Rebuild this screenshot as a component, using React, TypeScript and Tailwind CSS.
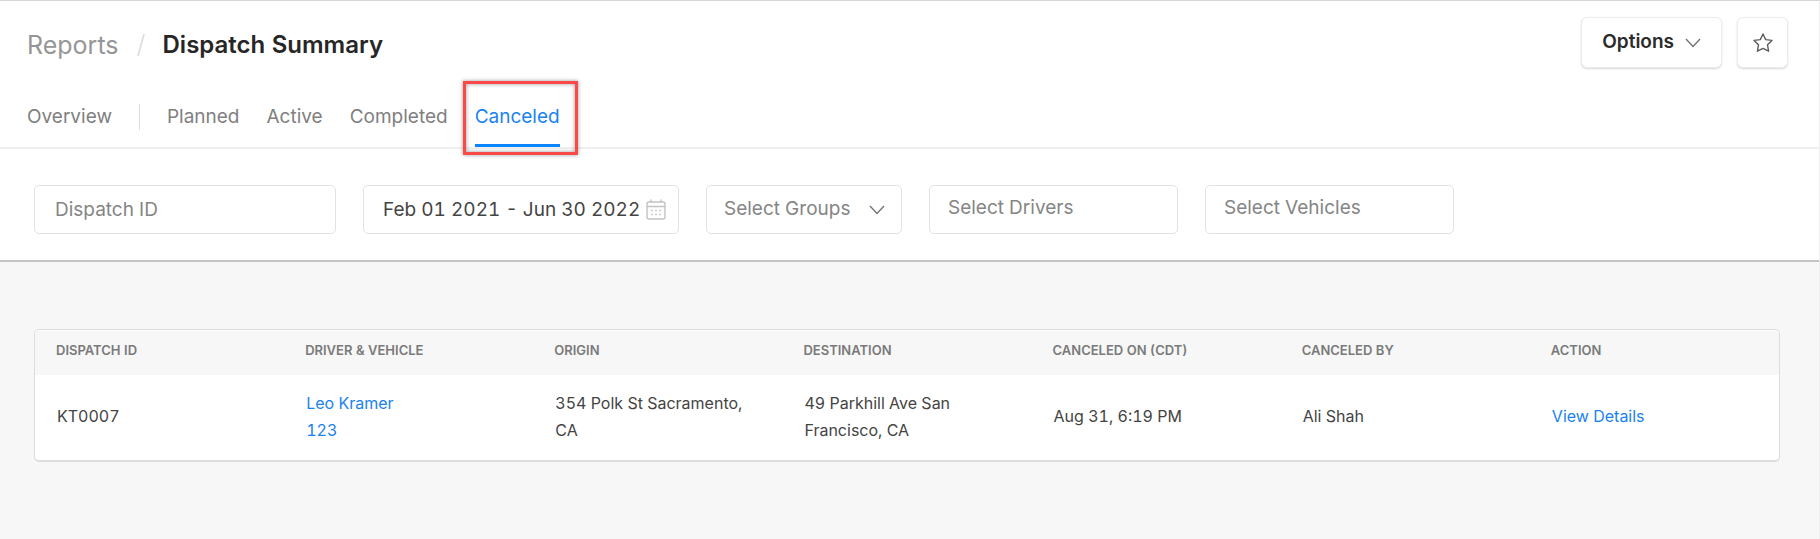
import { useState } from "react";

type Dispatch = {
  id: string;
  driver: string;
  vehicle: string;
  origin: string;
  destination: string;
  canceledOn: string;
  canceledBy: string;
}

const tabs = ["Planned", "Active", "Completed", "Canceled"]

const columns = [
  "Dispatch ID",
  "Driver & Vehicle",
  "Origin",
  "Destination",
  "Canceled On (CDT)",
  "Canceled By",
  "Action",
]

const dispatches: Dispatch[] = [
  {
    id: "KT0007",
    driver: "Leo Kramer",
    vehicle: "123",
    origin: "354 Polk St Sacramento, CA",
    destination: "49 Parkhill Ave San Francisco, CA",
    canceledOn: "Aug 31, 6:19 PM",
    canceledBy: "Ali Shah",
  },
]

const fieldClass =
  "h-[49px] rounded-[5px] border border-[#e3e3e3] bg-white text-[19px] text-[#444] outline-none placeholder:text-[#858585] placeholder:opacity-100"

export default function App() {
  const [activeTab, setActiveTab] = useState("Canceled")

  return (
    <div className="min-h-screen border-t border-r border-t-[#d6d6d6] border-r-[#efefef] bg-[#f7f7f7] font-['Inter','Liberation_Sans',sans-serif] text-[#444] tabular-nums">
      <header className="border-b-2 border-[#f0f0f0] bg-white pr-[31px] pl-[27px]">
        <div className="flex items-start justify-between pt-4">
          <nav aria-label="Breadcrumb" className="flex items-center gap-[18px] pt-[10px] text-[25px] leading-9">
            <a href="#reports" className="text-[#969696]">Reports</a>
            <SlashIcon />
            <h1 className="text-[24px] font-semibold text-[#262626]">Dispatch Summary</h1>
          </nav>
          <div className="flex items-center gap-[15px]">
            <button className="flex h-[51px] items-center gap-[11px] rounded-md border border-[#ececec] bg-white px-5 text-[19px] font-semibold text-[#2b2b2b] shadow-[0_1px_2px_rgba(0,0,0,0.16)]">
              Options
              <ChevronIcon />
            </button>
            <button
              aria-label="Add to favorites"
              className="flex size-[51px] items-center justify-center rounded-md border border-[#ececec] bg-white shadow-[0_1px_2px_rgba(0,0,0,0.16)]"
            >
              <StarIcon />
            </button>
          </div>
        </div>

        <nav aria-label="Dispatch status" className="flex gap-[27px] pt-[30px] text-[19px]">
          <Tab label="Overview" active={activeTab === "Overview"} onSelect={setActiveTab} />
          <span className="mt-[6px] h-[26px] w-px bg-[#dedede]" />
          {tabs.map((tab) => (
            <Tab key={tab} label={tab} active={activeTab === tab} onSelect={setActiveTab} />
          ))}
        </nav>
      </header>

      <form className="flex gap-[27px] border-b-2 border-[#c4c4c4] bg-white px-[34px] pt-9 pb-[26px]">
        <input aria-label="Dispatch ID" placeholder="Dispatch ID" className={`${fieldClass} w-[302px] px-5`} />
        <div className={`${fieldClass} flex w-[316px] items-center pr-3 pl-[19px]`}>
          <input
            aria-label="Date range"
            defaultValue="Feb 01 2021 - Jun 30 2022"
            className="h-full min-w-0 flex-1 outline-none"
          />
          <CalendarIcon />
        </div>
        <div className={`${fieldClass} grid w-[196px] items-center`}>
          <select
            aria-label="Groups"
            className="col-start-1 row-start-1 h-full w-full appearance-none bg-transparent pl-[17px] text-[#858585] outline-none"
          >
            <option>Select Groups</option>
          </select>
          <span className="pointer-events-none col-start-1 row-start-1 mr-4 justify-self-end">
            <ChevronIcon />
          </span>
        </div>
        <input aria-label="Drivers" placeholder="Select Drivers" className={`${fieldClass} w-[249px] px-[18px] pb-1`} />
        <input aria-label="Vehicles" placeholder="Select Vehicles" className={`${fieldClass} w-[249px] px-[18px] pb-1`} />
      </form>

      <main className="pt-[67px] pr-[39px] pl-[34px]">
        <div className="overflow-hidden rounded-[5px] border border-b-2 border-[#dcdcdc] bg-white pt-px">
          <table className="w-full table-fixed text-left">
            <thead className="bg-[#f7f7f7]">
              <tr>
                {columns.map((column) => (
                  <th key={column} className="h-11 pb-1 pl-[21px] text-[13px] font-semibold text-[#7a7a7a] uppercase">
                    {column}
                  </th>
                ))}
              </tr>
            </thead>
            <tbody className="text-[16px] leading-[27px]">
              {dispatches.map((dispatch) => (
                <tr key={dispatch.id} className="h-[85px]">
                  <Cell>{dispatch.id}</Cell>
                  <Cell>
                    <CellLink>{dispatch.driver}</CellLink>
                    <br />
                    <CellLink>{dispatch.vehicle}</CellLink>
                  </Cell>
                  <Cell>{dispatch.origin}</Cell>
                  <Cell>{dispatch.destination}</Cell>
                  <Cell>{dispatch.canceledOn}</Cell>
                  <Cell>{dispatch.canceledBy}</Cell>
                  <Cell>
                    <CellLink>View Details</CellLink>
                  </Cell>
                </tr>
              ))}
            </tbody>
          </table>
        </div>
      </main>
    </div>
  )
}

function Tab({
  label,
  active,
  onSelect,
} : {
  label: string;
  active: boolean;
  onSelect: (label: string) => void;
}) {
  return (
    <button
      onClick={() => onSelect(label)}
      className={
        active
          ? "relative h-[49px] border-b-[3px] border-[#0a84ff] pb-[7px] text-[#1a82f0]"
          : "relative h-[49px] border-b-[3px] border-transparent pb-[7px] text-[#808080]"
      }
    >
      {label}
      {active && (
        <span className="pointer-events-none absolute -top-[17px] -right-[18px] -bottom-[11px] -left-3 border-[3px] border-[#fb4848] shadow-[0_0_4px_rgba(0,0,0,0.4),inset_0_0_4px_rgba(0,0,0,0.4)]" />
      )}
    </button>
  )
}

function Cell({ children }: { children: React.ReactNode }) {
  return <td className="pr-7 pb-0.5 pl-[22px]">{children}</td>
}

function CellLink({ children }: { children: React.ReactNode }) {
  return <a href="#details" className="text-[#1a82f0]">{children}</a>
}

function SlashIcon() {
  return (
    <svg width="8" height="24" viewBox="0 0 8 24" fill="none" stroke="#dedede" strokeWidth="1.8" aria-hidden="true">
      <path d="M7 1 1 23" />
    </svg>
  )
}

function ChevronIcon() {
  return (
    <svg width="16" height="10" viewBox="0 0 16 10" fill="none" stroke="#707070" strokeWidth="1.3" aria-hidden="true">
      <path d="m1 1 7 7.5L15 1" />
    </svg>
  )
}

function StarIcon() {
  return (
    <svg width="20" height="20" viewBox="0 0 20 20" fill="none" stroke="#5c5c5c" strokeWidth="1.4" strokeLinejoin="round" aria-hidden="true">
      <path d="M10 1 12.700 6.600 19 7.400 14.500 11.800 15.600 18.200 10 15.400 4.400 18.200 5.500 11.800 1 7.400 7.300 6.600Z" />
    </svg>
  )
}

function CalendarIcon() {
  return (
    <svg width="20" height="21" viewBox="0 0 20 21" fill="none" stroke="#c2c2c2" strokeWidth="1.4" aria-hidden="true">
      <rect x="1" y="3" width="18" height="17" rx="2" />
      <path d="M1 7.5h18M5 .5V3M15 .5V3" />
      <path d="M5.2 11.5h1.6m2.4 0h1.6m2.4 0h1.6M5.2 15.5h1.6m2.4 0h1.6m2.4 0h1.6" strokeWidth="1.6" />
    </svg>
  )
}
